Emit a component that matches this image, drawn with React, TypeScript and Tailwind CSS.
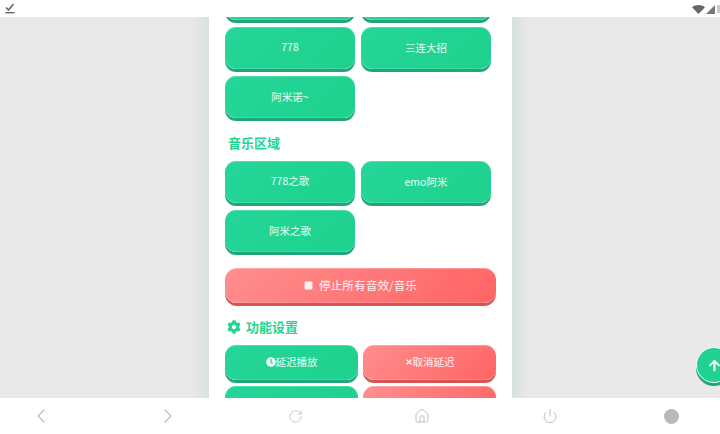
import { ChevronLeft, ChevronRight, RotateCw, Home, Power } from 'lucide-react'
import { FaArrowUp, FaClock, FaCog, FaStop, FaTimes } from 'react-icons/fa'
import type { ReactNode } from 'react'

const green = 'bg-[linear-gradient(135deg,#25d699,#1ed18c)] shadow-[0_3px_0_#1fa67a,inset_0_1px_0_rgba(255,255,255,0.2),inset_0_-1px_0_rgba(255,255,255,0.15)]'
const red = 'bg-[linear-gradient(135deg,#ff8e8e,#ff6464)] shadow-[0_3px_0_#d85353,inset_0_1px_0_rgba(255,255,255,0.25),inset_0_-1px_0_rgba(255,255,255,0.15)]'

function SoundButton({ label, className = 'pb-[1px]' }: { label: string; className?: string }) {
    return (
        <button className={`${green} h-[42px] rounded-[11px] flex items-center justify-center text-[10.5px] text-white/90 ${className}`}>
            {label}
        </button>
    )
}

function ActionButton({ tone, children }: { tone: string; children?: ReactNode }) {
    return (
        <button className={`${tone} h-[35px] rounded-[11px] flex items-center justify-center text-[10.5px] text-white/90 pb-[1px]`}>
            {children}
        </button>
    )
}

export default function App() {
    return (
        <div className="w-[720px] h-[434px] flex flex-col overflow-hidden relative bg-white font-['Noto_Sans_CJK_SC','Noto_Sans',sans-serif]">
            {/* status bar */}
            <div className="h-[17px] shrink-0 flex items-center justify-between bg-white pl-[5px]">
                <svg width="10" height="11" viewBox="0 0 10 11" className="text-[#666]">
                    <path d="M1 4.5 3.5 7 8.5 1" fill="none" stroke="currentColor" strokeWidth="1.6" />
                    <rect x="0.5" y="9" width="9" height="1.4" fill="currentColor" />
                </svg>
                <div className="flex items-center gap-px pt-px">
                    <svg width="13" height="9" viewBox="0 0 13 9" className="text-[#666]">
                        <path d="M0 2.2C3.6-.7 9.4-.7 13 2.2L6.5 9z" fill="currentColor" />
                    </svg>
                    <svg width="9" height="9" viewBox="0 0 9 9" className="text-[#777]">
                        <path d="M9 0V9H0z" fill="currentColor" />
                    </svg>
                    <div className="w-[3px] h-[8px] bg-[#ccc] ml-px" />
                </div>
            </div>

            {/* page */}
            <div className="flex-1 min-h-0 overflow-hidden bg-[#e9e9e9] flex justify-center">
                <div className="w-[303px] ml-px h-fit -mt-[39px] bg-white shadow-[0_0_20px_rgba(40,160,120,0.2)] px-[16px]">
                    <div className="grid grid-cols-[130px_130px] gap-x-[6px] gap-y-[7px]">
                        <SoundButton label="" />
                        <SoundButton label="" />
                        <SoundButton label="778" className="pb-[3px]" />
                        <SoundButton label="三连大招" className="pb-0" />
                        <SoundButton label="阿米诺~" />
                    </div>

                    <h2 className="mt-[16px] ml-[3px] h-[17px] leading-[17px] text-[13px] font-bold text-[#1fd692]">音乐区域</h2>

                    <div className="mt-[10px] grid grid-cols-[130px_130px] gap-x-[6px] gap-y-[7px]">
                        <SoundButton label="778之歌" className="pb-[3px]" />
                        <SoundButton label="emo阿米" className="pb-0" />
                        <SoundButton label="阿米之歌" />
                    </div>

                    <button className={`${red} mt-[16px] w-[271px] h-[35px] rounded-[12px] flex items-center justify-center gap-[6px] text-[11.7px] text-white/90 pb-[1px]`}>
                        <FaStop size={9} />
                        停止所有音效/音乐
                    </button>

                    <div className="mt-[15px] ml-[2px] h-[17px] flex items-center gap-[5px] text-[13px] font-bold text-[#1fd692]">
                        <FaCog size={14} />
                        <span>功能设置</span>
                    </div>

                    <div className="mt-[10px] w-[271px] grid grid-cols-2 gap-x-[5px] gap-y-[6px] pb-[20px]">
                        <ActionButton tone={green}>
                            <FaClock size={10} />
                            延迟播放
                        </ActionButton>
                        <ActionButton tone={red}>
                            <FaTimes size={8} />
                            取消延迟
                        </ActionButton>
                        <ActionButton tone={green} />
                        <ActionButton tone={red} />
                    </div>
                </div>
            </div>

            {/* back to top */}
            <button className="absolute left-[696px] top-[347px] w-[36px] h-[36px] rounded-full bg-[#20d18f] border border-white shadow-[0_3px_0_#1fa67a] flex items-center justify-center text-white">
                <FaArrowUp size={13} />
            </button>

            {/* bottom nav */}
            <div className="h-[36px] shrink-0 bg-white grid grid-cols-[53px_127px_123px_127px_128px_121px] items-center text-[#bcbcbc]">
                <ChevronLeft size={24} strokeWidth={1.3} className="justify-self-end" />
                <ChevronRight size={24} strokeWidth={1.3} className="justify-self-end" />
                <RotateCw size={15} strokeWidth={1.3} className="justify-self-end" />
                <Home size={16} strokeWidth={1.4} className="justify-self-end" />
                <Power size={16} strokeWidth={1.4} className="justify-self-end" />
                <div className="w-[15px] h-[15px] rounded-full bg-[#b9b9b9] justify-self-end" />
            </div>
        </div>
    )
}
